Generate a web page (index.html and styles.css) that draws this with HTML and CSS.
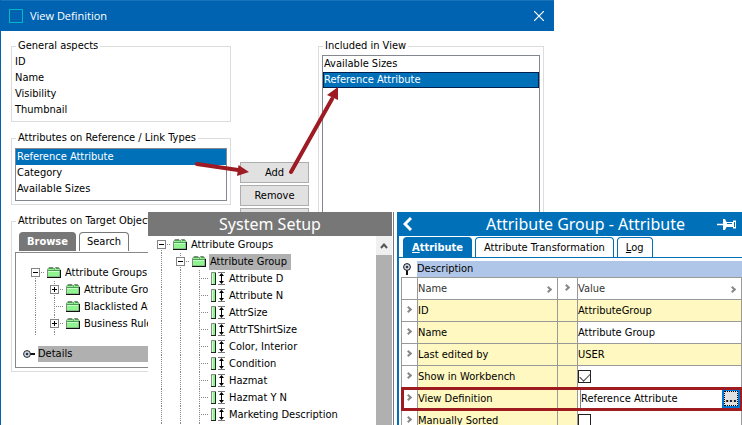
FILE: index.html
```html
<!DOCTYPE html>
<html lang="en">
<head>
<meta charset="utf-8">
<title>View Definition</title>
<link rel="stylesheet" href="styles.css">
</head>
<body>
<svg class="defs" aria-hidden="true">
  <symbol id="folder" viewBox="0 0 14 11">
    <path d="M0.5 10V2.5L2 0.5h4L7.5 2.5V1.5L8.5 0.5h3L13 2.5V10z" fill="#8ff58f" stroke="#7d8a7d"/>
    <path d="M1 3.5h12M2 1.5h4M9 1.5h3" stroke="#4c9a55" fill="none"/>
    <path d="M1 4.5h11" stroke="#c9ffc9"/>
    <path d="M0 10.5h14M13.5 3v8" stroke="#111" fill="none"/>
  </symbol>
  <symbol id="attr" viewBox="0 0 14 13">
    <path d="M0 0h5v13H0z" fill="#8ff58f"/>
    <path d="M0.5 13V0.5H5" stroke="#8a8a8a" fill="none"/>
    <path d="M1.5 12V1.5" stroke="#d5ffd5"/>
    <path d="M0 12.5h5M4.500 1v12" stroke="#222" fill="none"/>
    <path d="M7 0.5h7M7 12.500h7" stroke="#777"/>
    <path d="M10.500 2v9" stroke="#000"/>
    <path d="M10.500 1L13 4H8zM10.500 12L13 9H8z" fill="#000"/>
  </symbol>
  <symbol id="key" viewBox="0 0 12 8">
    <path d="M7 4h5" stroke="#111" stroke-width="2"/>
    <circle cx="4" cy="4" r="3.400" fill="#cfdcea" stroke="#222"/>
    <circle cx="4" cy="4" r="1.300" fill="#334"/>
  </symbol>
</svg>

<main class="desktop">
  <section class="dialog">
    <header class="dialog-bar">
      <span class="app-icon"></span>
      <h1>View Definition</h1>
      <button class="close" aria-label="Close"><svg width="10" height="10" viewBox="0 0 10 10"><path d="M0 0L10 10M10 0L0 10" stroke="#fff" stroke-width="1.200"/></svg></button>
    </header>
    <div class="dialog-body">
      <div class="sources">
        <fieldset class="group general">
          <legend>General aspects</legend>
          <ul class="rows"><li>ID</li><li>Name</li><li>Visibility</li><li>Thumbnail</li></ul>
        </fieldset>
        <fieldset class="group">
          <legend>Attributes on Reference / Link Types</legend>
          <ul class="rows listbox"><li class="selected">Reference Attribute</li><li>Category</li><li>Available Sizes</li></ul>
        </fieldset>
        <fieldset class="group">
          <legend>Attributes on Target Object</legend>
          <div class="tabs gray">
            <button class="tab active">Browse</button>
            <button class="tab">Search</button>
          </div>
          <div class="browse">
            <ul class="tree">
              <li><i class="rail first"><b class="box"></b></i><svg class="ico"><use href="#folder"/></svg><span>Attribute Groups</span></li>
              <li><i class="rail line"></i><i class="rail"><b class="box plus"></b></i><svg class="ico"><use href="#folder"/></svg><span>Attribute Groups</span></li>
              <li><i class="rail line"></i><i class="rail"></i><svg class="ico"><use href="#folder"/></svg><span>Blacklisted Attributes</span></li>
              <li><i class="rail line"></i><i class="rail"><b class="box plus"></b></i><svg class="ico"><use href="#folder"/></svg><span>Business Rules</span></li>
              <li class="tail"><i class="rail line"></i><i class="rail line"></i></li>
            </ul>
            <div class="details"><svg width="12" height="8"><use href="#key"/></svg><span>Details</span></div>
          </div>
        </fieldset>
      </div>
      <div class="actions">
        <button>Add</button>
        <button>Remove</button>
        <button aria-label="Move"></button>
      </div>
      <fieldset class="group included">
        <legend>Included in View</legend>
        <ul class="rows listbox"><li>Available Sizes</li><li class="selected focus">Reference Attribute</li></ul>
      </fieldset>
    </div>
  </section>

  <svg class="arrows" width="160" height="110" viewBox="0 0 160 110" aria-hidden="true">
    <g stroke="#9e1b24" stroke-width="4" stroke-linecap="round" fill="#9e1b24">
      <path d="M7 84L48 90M101 92L142 19"/>
      <path stroke="none" d="M48.500 85L59 92L47 96zM148 7L148 20L137 15z"/>
    </g>
  </svg>

  <section class="setup">
    <h2>System Setup</h2>
    <div class="setup-body">
      <ul class="tree">
        <li><i class="rail first"><b class="box"></b></i><svg class="ico"><use href="#folder"/></svg><span>Attribute Groups</span></li>
        <li><i class="rail line"></i><i class="rail"><b class="box"></b></i><svg class="ico"><use href="#folder"/></svg><span class="current">Attribute Group</span></li>
        <li><i class="rail line"></i><i class="rail line"></i><i class="rail"></i><svg class="ico"><use href="#attr"/></svg><span>Attribute D</span></li>
        <li><i class="rail line"></i><i class="rail line"></i><i class="rail"></i><svg class="ico"><use href="#attr"/></svg><span>Attribute N</span></li>
        <li><i class="rail line"></i><i class="rail line"></i><i class="rail"></i><svg class="ico"><use href="#attr"/></svg><span>AttrSize</span></li>
        <li><i class="rail line"></i><i class="rail line"></i><i class="rail"></i><svg class="ico"><use href="#attr"/></svg><span>AttrTShirtSize</span></li>
        <li><i class="rail line"></i><i class="rail line"></i><i class="rail"></i><svg class="ico"><use href="#attr"/></svg><span>Color, Interior</span></li>
        <li><i class="rail line"></i><i class="rail line"></i><i class="rail"></i><svg class="ico"><use href="#attr"/></svg><span>Condition</span></li>
        <li><i class="rail line"></i><i class="rail line"></i><i class="rail"></i><svg class="ico"><use href="#attr"/></svg><span>Hazmat</span></li>
        <li><i class="rail line"></i><i class="rail line"></i><i class="rail"></i><svg class="ico"><use href="#attr"/></svg><span>Hazmat Y N</span></li>
        <li><i class="rail line"></i><i class="rail line"></i><i class="rail"></i><svg class="ico"><use href="#attr"/></svg><span>Marketing Description</span></li>
        <li><i class="rail line"></i><i class="rail line"></i><i class="rail"></i><svg class="ico"><use href="#attr"/></svg></li>
      </ul>
      <div class="scroll"><button aria-label="Scroll up"><svg width="8" height="6" viewBox="0 0 8 6"><path d="M1 5L4 1.500L7 5" fill="none" stroke="#555" stroke-width="2"/></svg></button></div>
    </div>
  </section>

  <section class="editor">
    <header class="editor-bar">
      <button aria-label="Back"><svg width="9" height="14" viewBox="0 0 9 14"><path d="M8 1L2 7L8 13" fill="none" stroke="#fff" stroke-width="3"/></svg></button>
      <h2>Attribute Group - Attribute</h2>
      <button aria-label="Pin"><svg width="19" height="11" viewBox="0 0 19 11"><path d="M0 5.500h7" stroke="#fff" stroke-width="1.500"/><path d="M6 0h2l1.500 3H16V1.500h3v8h-3V8H9.500L8 11H6z" fill="#fff"/><path d="M10 4.500h5M17.500 3v5" stroke="#0070b9"/></svg></button>
    </header>
    <div class="tabs blue">
      <button class="tab active"><u>A</u>ttribute</button>
      <button class="tab">Attribute Transformation</button>
      <button class="tab"><u>L</u>og</button>
    </div>
    <div class="section-head"><svg width="8" height="12" viewBox="0 0 8 12"><path d="M4 7v5" stroke="#111" stroke-width="2"/><circle cx="4" cy="4" r="3.400" fill="#cfdcea" stroke="#111"/><circle cx="4" cy="4" r="1.300" fill="#334"/></svg><h3>Description</h3></div>
    <table>
      <colgroup><col class="c-mark"><col class="c-name"><col class="c-gap"><col></colgroup>
      <thead>
        <tr><th></th><th>Name<i class="chev right"></i></th><th class="mark"><i class="chev"></i></th><th>Value<i class="chev right"></i></th></tr>
      </thead>
      <tbody>
        <tr><td class="mark"><i class="chev"></i></td><td class="y">ID</td><td class="y"></td><td class="y">AttributeGroup</td></tr>
        <tr><td class="mark"><i class="chev"></i></td><td class="y">Name</td><td class="y"></td><td>Attribute Group</td></tr>
        <tr><td class="mark"><i class="chev"></i></td><td class="y">Last edited by</td><td class="y"></td><td class="y">USER</td></tr>
        <tr><td class="mark"><i class="chev"></i></td><td class="y"><label for="show">Show in Workbench</label></td><td class="y"></td><td><input type="checkbox" id="show" checked></td></tr>
        <tr class="marked"><td class="mark"><i class="chev"></i></td><td class="y"><label for="view">View Definition</label></td><td class="y"></td><td><div class="picker"><input type="text" id="view" value="Reference Attribute"><button>...</button></div></td></tr>
        <tr><td class="mark"><i class="chev"></i></td><td class="y"><label for="sorted">Manually Sorted</label></td><td class="y"></td><td><input type="checkbox" id="sorted"></td></tr>
      </tbody>
    </table>
  </section>
</main>
</body>
</html>
```
FILE: styles.css
```css
* { box-sizing: border-box; }
body {
  margin: 0;
  background: #fff;
  color: #000;
  font: 11px/16px "DejaVu Sans Condensed", "Noto Sans", sans-serif;
}
h1, h2, h3, ul { margin: 0; padding: 0; font-weight: normal; }
ul { list-style: none; }
button, input { font: inherit; color: inherit; margin: 0; }
button { padding: 0; border: 0; background: none; }
.defs { display: none; }
.desktop { position: relative; height: 100vh; overflow: hidden; }

/* View Definition dialog */
.dialog {
  display: flex;
  flex-direction: column;
  width: 74.7%;
  height: 100%;
  border-left: 1px solid #0063b1;
}
.dialog-bar {
  display: flex;
  align-items: center;
  flex: none;
  height: 31px;
  padding: 0 10px 0 8px;
  background: #0063b1;
  border-top: 1px solid #1a72b8;
  color: #fff;
}
.app-icon { width: 14px; height: 14px; border: 1px solid #00b7c3; }
.dialog-bar h1 { flex: 1; margin-left: 7px; font: 11px/16px "Open Sans", sans-serif; }
.close { display: flex; }
.dialog-body { display: flex; flex: 1; padding: 7px 10px 0; }
.sources { width: 220px; }
.group {
  min-width: 0;
  margin: 0 0 8px;
  padding: 2px 3px 3px;
  border: 1px solid #dcdcdc;
}
.group legend { margin-left: 1px; padding: 0 2px; white-space: nowrap; }
.general { padding: 0 3px 3px; }
.rows li { white-space: nowrap; }
.listbox { padding: 0 0 3px; border: 1px solid #828790; }
.listbox li { padding-left: 1px; }
.selected { background: #0070b9; color: #fff; }
.focus { box-shadow: inset 0 0 0 1px #00204d; }
.actions { display: flex; flex-direction: column; gap: 2px; width: 69px; margin: 124px 9px 0 9px; }
.actions button { height: 21px; background: #e1e1e1; border: 1px solid #adadad; }
.included { flex: 1; display: flex; flex-direction: column; margin-bottom: -8px; padding-top: 1px; }
.included .listbox { height: 400px; }

/* Annotation arrows over the dialog */
.arrows { position: absolute; left: 190px; top: 80px; }

/* Tabs */
.tabs { display: flex; gap: 3px; }
.tab { height: 19px; padding: 0 7px; border: 1px solid #777; border-bottom: 0; border-radius: 4px 4px 0 0; white-space: nowrap; }
.tab.active { color: #fff; font-weight: bold; }
.gray { padding: 1px 4px; }
.gray .active { background: #777; }
.blue { padding: 1px 4px 0; border-bottom: 1px solid #0070b9; }
.blue .tab { height: 20px; border-color: #0070b9; }
.blue .active { background: #0070b9; }

.browse { padding: 11px 0 5px; border: 1px solid #888; border-right: 0; }
.browse .tree { padding-left: 10px; }
.details { display: flex; align-items: center; margin: 11px 0 0 7px; }
.details span { flex: 1; margin-left: 3px; background: #b0b0b0; }

/* Trees */
.tree { overflow: hidden; }
.tree li { display: flex; align-items: center; height: 17px; white-space: nowrap; }
.tree .tail { height: 3px; }
.rail {
  position: relative;
  flex: none;
  display: flex;
  align-items: center;
  width: 19px;
  height: 100%;
  padding-left: 5px;
  background:
    repeating-linear-gradient(#888 0 1px, transparent 1px 2px) 9px 0 / 1px 100% no-repeat,
    repeating-linear-gradient(90deg, #888 0 1px, transparent 1px 2px) 9px 8px / 12px 1px no-repeat;
}
.rail.line { background: repeating-linear-gradient(#888 0 1px, transparent 1px 2px) 9px 0 / 1px 100% no-repeat; }
.rail.first {
  background:
    repeating-linear-gradient(#888 0 1px, transparent 1px 2px) 9px 8px / 1px 9px no-repeat,
    repeating-linear-gradient(90deg, #888 0 1px, transparent 1px 2px) 9px 8px / 12px 1px no-repeat;
}
.box {
  width: 9px;
  height: 9px;
  border: 1px solid #848484;
  background: linear-gradient(#000, #000) 1px 3px / 5px 1px no-repeat, #fff;
}
.plus {
  background:
    linear-gradient(#000, #000) 1px 3px / 5px 1px no-repeat,
    linear-gradient(#000, #000) 3px 1px / 1px 5px no-repeat, #fff;
}
.ico { flex: none; width: 14px; height: 13px; margin: 0 3px 0 2px; }
.tree span { padding: 0 4px 0 1px; }
.current { background: #b0b0b0; }

/* System Setup window */
.setup {
  position: absolute;
  left: 148px;
  top: 212px;
  bottom: 0;
  width: 250px;
  overflow: hidden;
  background: linear-gradient(#777, #777) 245px 0 / 1px 100% no-repeat, #fff;
}
.setup h2, .editor-bar h2 { font: 16px/24px "Noto Sans", sans-serif; text-align: center; color: #fff; }
.setup h2 { width: 244px; background: #777; }
.setup-body { display: flex; width: 244px; height: 100%; }
.setup .tree { flex: 1; padding-left: 4px; }
.scroll { width: 16px; background: #b0b0b0; }
.scroll button { display: flex; align-items: center; justify-content: center; width: 100%; height: 19px; background: #f0f0f0; }

/* Attribute Group window */
.editor {
  position: absolute;
  left: 397px;
  right: 0;
  top: 212px;
  bottom: 0;
  overflow: hidden;
  background: #fff;
  border-left: 2px solid #0070b9;
}
.editor-bar { display: flex; align-items: center; height: 24px; padding: 0 6px 0 4px; background: #0070b9; }
.editor-bar button { display: flex; }
.editor-bar h2 { flex: 1; padding-left: 42px; }
.blue .tab { padding: 0 8px; }
.section-head { display: flex; align-items: center; height: 19px; padding: 3px 0 0 4px; }
.section-head h3 { flex: 1; margin-left: 6px; font-size: 11px; background: #b0c6e8; }
table { width: calc(100% - 2px); margin-left: 2px; border-collapse: collapse; table-layout: fixed; }
.c-mark { width: 16px; }
.c-name { width: 140px; }
.c-gap { width: 20px; }
th, td { height: 22px; padding: 0; border: 1px solid #999; text-align: left; font-weight: normal; white-space: nowrap; }
th { color: #333; }
.y { background: #fff8c0; }
.mark { text-align: center; }
.chev {
  display: inline-block;
  width: 5px;
  height: 5px;
  margin: 0 2px 2px 0;
  border: solid #888;
  border-width: 2px 2px 0 0;
  transform: rotate(45deg);
}
.right { float: right; margin: 6px 6px 0 0; }
.marked { outline: 3px solid #9e1b20; outline-offset: -2px; }
input[type="checkbox"] {
  display: block;
  appearance: none;
  width: 13px;
  height: 13px;
  border: 1px solid #222;
  background: #fff;
}
input[type="checkbox"]:checked::before {
  content: "";
  display: block;
  width: 9px;
  height: 5px;
  margin: 2px 1px;
  border: solid #444;
  border-width: 0 0 1px 1px;
  transform: rotate(-45deg);
}
.picker { display: flex; gap: 2px; height: 19px; padding: 0 1px 0 2px; }
.picker input { flex: 1; min-width: 0; padding: 0; border: solid #888; border-width: 1px 0 0 1px; background: #fff; }
.picker button { width: 18px; border: 2px solid #0078d7; background: #e1e1e1; outline: 1px dotted #000; outline-offset: -3px; font-weight: bold; line-height: 12px; }
```
